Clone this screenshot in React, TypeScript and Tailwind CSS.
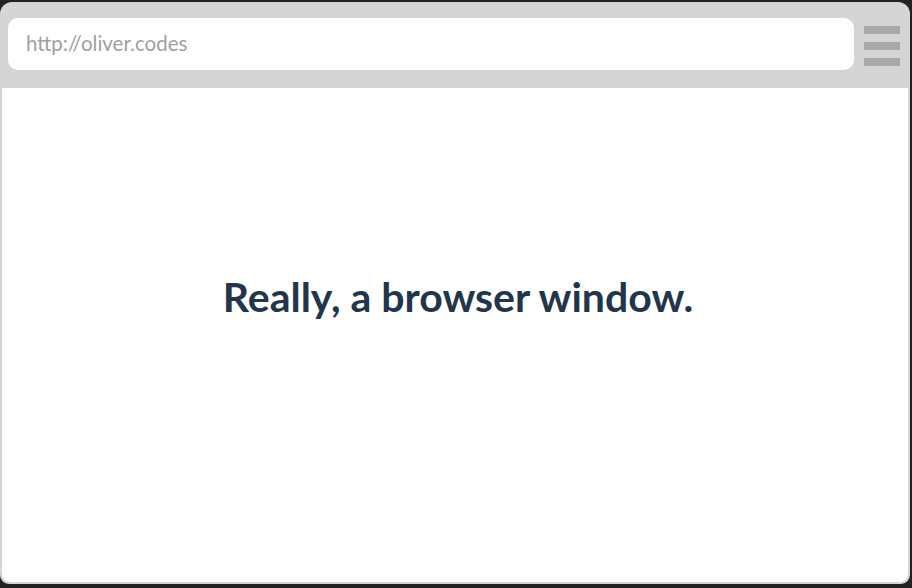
import React from "react";

export default function App() {
  return (
    <div className="w-[912px] h-[588px] bg-[#222222] pt-[2px] overflow-hidden">
      <div className="w-[910px] h-[582px] rounded-t-[12px] rounded-b-[9px] bg-[#d6d5d6] px-[2px] pb-[2px] flex flex-col">
        <div className="h-[86px] flex items-start pt-[16px] pl-[6px] shrink-0">
          <div className="w-[846px] h-[52px] bg-white rounded-[10px] flex items-center pl-[18px] pb-[2px]">
            <span
              className="text-[20.5px] text-[#a0a0a0]"
              style={{ fontFamily: 'Lato, "Noto Sans", sans-serif' }}
            >
              http://oliver.codes
            </span>
          </div>
          <div className="ml-[10px] mt-[8px] flex flex-col gap-[8px]">
            <div className="w-[36px] h-[8px] bg-[#a8a8a8]" />
            <div className="w-[36px] h-[8px] bg-[#a8a8a8]" />
            <div className="w-[36px] h-[8px] bg-[#a8a8a8]" />
          </div>
        </div>
        <div className="flex-1 bg-white rounded-b-[8px] flex justify-center pt-[184px]">
          <h1
            className="text-[41px] font-bold text-[#22364b] leading-[1.2] pl-[6px]"
            style={{ fontFamily: 'Lato, "Noto Sans", sans-serif' }}
          >
            Really, a browser window.
          </h1>
        </div>
      </div>
    </div>
  );
}
